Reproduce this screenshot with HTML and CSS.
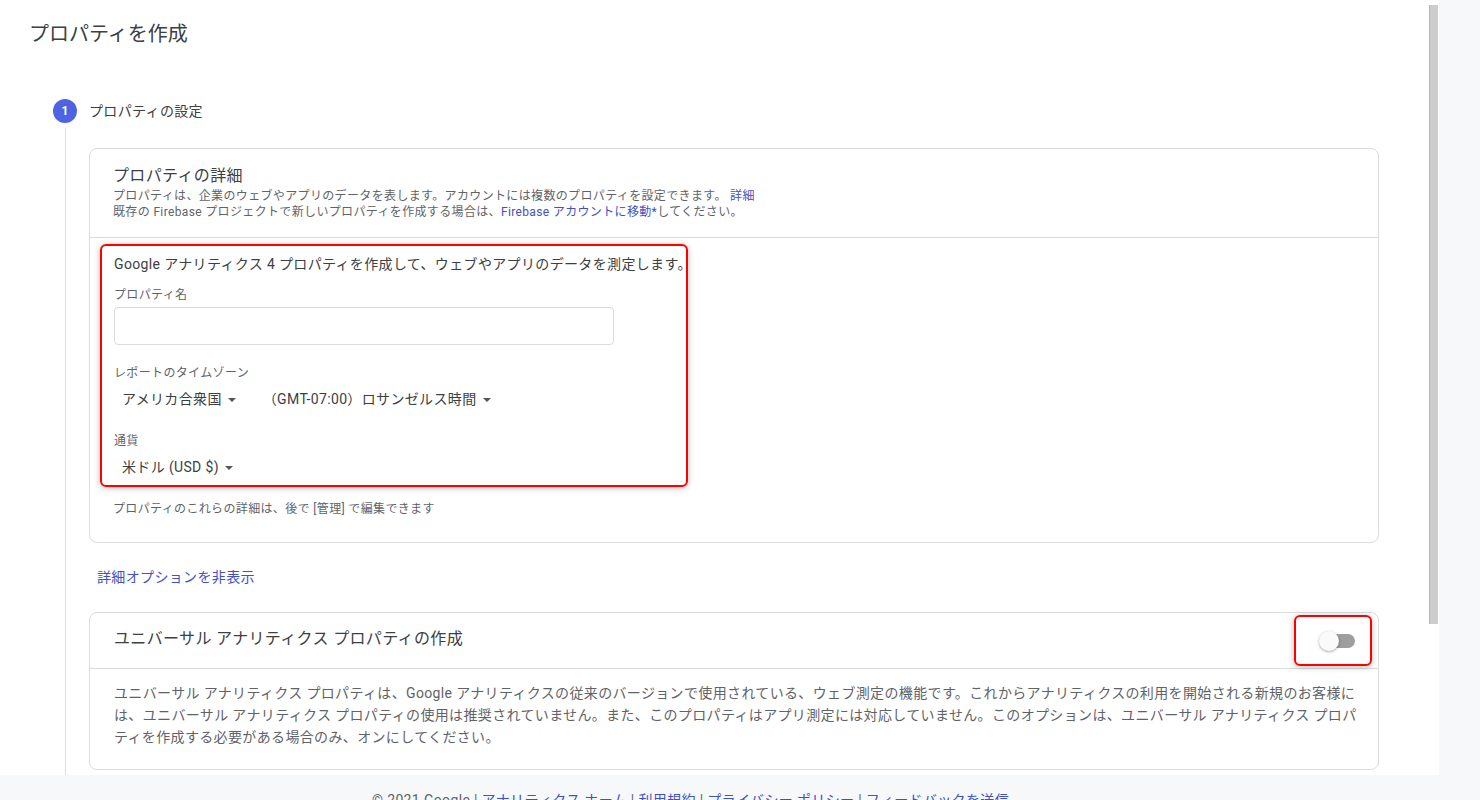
FILE: index.html
```html
<!DOCTYPE html>
<html lang="ja">
<head>
<meta charset="utf-8">
<title>プロパティを作成</title>
<link rel="stylesheet" href="styles.css">
</head>
<body>
<div class="page">
  <div class="app">
    <main class="content">
      <h1 class="title">プロパティを作成</h1>
      <section class="step">
        <div class="step-num">1</div>
        <div class="step-label">プロパティの設定</div>
        <div class="step-line"></div>
        <div class="step-body">
          <div class="card">
            <div class="card-head">
              <h2 class="card-title">プロパティの詳細</h2>
              <p class="card-sub">プロパティは、企業のウェブやアプリのデータを表します。アカウントには複数のプロパティを設定できます。 <a class="link" href="#">詳細</a></p>
              <p class="card-sub">既存の Firebase プロジェクトで新しいプロパティを作成する場合は、<a class="link" href="#">Firebase アカウントに移動*</a>してください。</p>
            </div>
            <div class="card-body">
              <div class="annot">
                <div class="intro">Google アナリティクス 4 プロパティを作成して、ウェブやアプリのデータを測定します。</div>
                <div class="field-label">プロパティ名</div>
                <div class="input"></div>
                <div class="field-label gap-lg">レポートのタイムゾーン</div>
                <div class="selects">
                  <div class="select">アメリカ合衆国<span class="caret"></span></div>
                  <div class="select">（GMT-07:00）ロサンゼルス時間<span class="caret"></span></div>
                </div>
                <div class="field-label gap-xl">通貨</div>
                <div class="selects">
                  <div class="select">米ドル (USD $)<span class="caret"></span></div>
                </div>
              </div>
              <p class="note">プロパティのこれらの詳細は、後で [管理] で編集できます</p>
            </div>
          </div>

          <a class="link adv" href="#">詳細オプションを非表示</a>

          <div class="card card-ua">
            <div class="ua-head">
              <div class="ua-title">ユニバーサル アナリティクス プロパティの作成</div>
              <div class="toggle-box">
                <div class="toggle">
                  <span class="track"></span>
                  <span class="knob"></span>
                </div>
              </div>
            </div>
            <div class="ua-body">ユニバーサル アナリティクス プロパティは、Google アナリティクスの従来のバージョンで使用されている、ウェブ測定の機能です。これからアナリティクスの利用を開始される新規のお客様に<br>は、ユニバーサル アナリティクス プロパティの使用は推奨されていません。また、このプロパティはアプリ測定には対応していません。このオプションは、ユニバーサル アナリティクス プロパ<br>ティを作成する必要がある場合のみ、オンにしてください。</div>
          </div>
        </div>
      </section>
    </main>
    <div class="scrollbar"><div class="thumb"></div></div>
  </div>
  <div class="side"></div>
</div>
<footer class="footer">© 2021 Google | <a class="link" href="#">アナリティクス ホーム</a> | <a class="link" href="#">利用規約</a> | <a class="link" href="#">プライバシー ポリシー</a> | <a class="link" href="#">フィードバックを送信</a></footer>
</body>
</html>
```

FILE: styles.css
```css
html, body {
  margin: 0;
  padding: 0;
}
body {
  background: #f7f8fa;
  font-family: "Roboto", "Noto Sans CJK JP", sans-serif;
  color: #3c4043;
  letter-spacing: 0.022em;
  height: 800px;
  overflow: hidden;
}
.page {
  display: flex;
}
.app {
  width: 1439px;
  height: 775px;
  background: #fff;
  display: flex;
}
.content {
  width: 1429px;
  height: 775px;
  overflow: hidden;
}
.scrollbar {
  width: 10px;
}
.thumb {
  margin-top: 5px;
  width: 8px;
  height: 619px;
  background: #cdcdcd;
  border: 1px solid #b4b4b4;
  border-width: 0 0 0 1px;
}
.side {
  flex: 1;
}

.title {
  margin: 0;
  padding: 20px 0 0 29px;
  font-size: 20px;
  line-height: 28px;
  font-weight: 400;
  letter-spacing: 0;
  color: #3c4043;
}

.step {
  margin: 51px 50px 0 53px;
  display: grid;
  grid-template-columns: 24px 1fr;
  grid-template-rows: 24px auto;
  column-gap: 12px;
}
.step-num {
  width: 24px;
  height: 24px;
  border-radius: 50%;
  background: #4f63e2;
  color: #fff;
  font-size: 12px;
  font-weight: 700;
  letter-spacing: 0;
  display: flex;
  align-items: center;
  justify-content: center;
}
.step-label {
  font-size: 14px;
  line-height: 24px;
  color: #3c4043;
}
.step-line {
  justify-self: center;
  width: 1px;
  margin-top: 5px;
  background: #dadce0;
}
.step-body {
  padding: 25px 0 60px;
}

.card {
  border: 1px solid #dadce0;
  border-radius: 8px;
  background: #fff;
}
.card-head {
  padding: 15px 23px 17px;
  border-bottom: 1px solid #dadce0;
}
.card-title {
  margin: 0;
  font-size: 16px;
  line-height: 24px;
  font-weight: 400;
  color: #3c4043;
}
.card-sub {
  margin: 0;
  font-size: 12px;
  line-height: 16px;
  color: #5f6368;
}
.link {
  color: #3f51c5;
  text-decoration: none;
}
.card-body {
  padding: 6px 0 25px 10px;
}
.annot {
  width: 588px;
  box-sizing: border-box;
  border: 2px solid #f00;
  border-radius: 6px;
  padding: 8px 0 8px 12px;
  box-shadow: 0 1px 6px rgba(0, 0, 0, 0.28);
}
.intro {
  font-size: 14px;
  line-height: 20px;
  color: #3c4043;
  white-space: nowrap;
}
.field-label {
  margin-top: 13px;
  font-size: 12px;
  line-height: 16px;
  color: #5f6368;
}
.field-label.gap-lg {
  margin-top: 20px;
}
.field-label.gap-xl {
  margin-top: 24px;
}
.input {
  margin-top: 4px;
  width: 500px;
  height: 38px;
  box-sizing: border-box;
  border: 1px solid #dadce0;
  border-radius: 4px;
}
.selects {
  margin-top: 8px;
  display: flex;
  gap: 11px;
}
.select {
  display: inline-flex;
  align-items: center;
  padding: 0 8px;
  font-size: 14px;
  line-height: 20px;
  color: #3c4043;
}
.caret {
  margin-left: 6px;
  width: 0;
  height: 0;
  border-left: 4px solid transparent;
  border-right: 4px solid transparent;
  border-top: 4px solid #555;
  margin-top: 2px;
}
.note {
  margin: 14px 0 0 13px;
  font-size: 12px;
  line-height: 16px;
  color: #5f6368;
}

.adv {
  display: inline-block;
  margin: 24px 0 0 8px;
  font-size: 14px;
  line-height: 20px;
}

.card-ua {
  margin-top: 25px;
}
.ua-head {
  height: 55px;
  display: flex;
  align-items: center;
  justify-content: space-between;
  padding: 0 6px 0 24px;
  border-bottom: 1px solid #dadce0;
}
.ua-title {
  font-size: 16px;
  line-height: 24px;
  color: #3c4043;
  margin-bottom: 3px;
}
.toggle-box {
  width: 78px;
  height: 51px;
  box-sizing: border-box;
  border: 2px solid #f00;
  border-radius: 6px;
  box-shadow: 0 1px 6px rgba(0, 0, 0, 0.28);
  display: flex;
  align-items: center;
  justify-content: center;
}
.toggle {
  position: relative;
  width: 36px;
  height: 20px;
  margin-left: 8px;
}
.track {
  position: absolute;
  right: 0;
  top: 3px;
  width: 30px;
  height: 14px;
  border-radius: 7px;
  background: #9e9e9e;
}
.knob {
  position: absolute;
  left: 0;
  top: 0;
  width: 20px;
  height: 20px;
  border-radius: 50%;
  background: #fafafa;
  box-shadow: 0 1px 3px rgba(0, 0, 0, 0.35);
}
.ua-body {
  padding: 13px 0 21px 24px;
  font-size: 14px;
  line-height: 22px;
  color: #5f6368;
  white-space: nowrap;
}

.footer {
  padding: 15px 0 0 372px;
  font-size: 14px;
  line-height: 20px;
  color: #5f6368;
  white-space: nowrap;
}
```
